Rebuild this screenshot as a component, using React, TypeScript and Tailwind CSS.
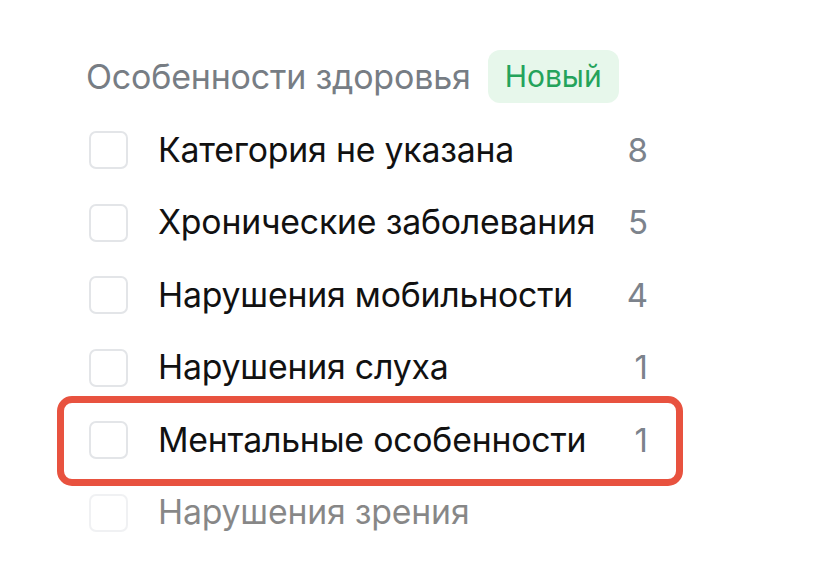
const rows = [
  { label: "Категория не указана", count: 8 },
  { label: "Хронические заболевания", count: 5 },
  { label: "Нарушения мобильности", count: 4 },
  { label: "Нарушения слуха", count: 1 },
  { label: "Ментальные особенности", count: 1, highlight: true },
  { label: "Нарушения зрения", count: null, faded: true },
];

function Row({ label, count, highlight, faded }: { label: string; count: number | null; highlight?: boolean; faded?: boolean }) {
  return (
    <div className={`relative flex h-[72.5px] items-center ${faded ? "opacity-50" : ""}`}>
      <div className="h-[38px] w-[39px] shrink-0 rounded-[7px] border-2 border-[#e3e5e8] bg-white" />
      <div className="ml-[30px] flex-1 text-[33.8px] tracking-[-0.2px] text-[#111]">{label}</div>
      {count !== null && <div className="w-[40px] text-right text-[33px] text-[#7c838c]">{count}</div>}
      {highlight && (
        <div className="pointer-events-none absolute -left-[32px] -right-[35px] -top-[8px] -bottom-[9px] rounded-[15px] border-[7px] border-[#e8523f]" />
      )}
    </div>
  );
}

export default function App() {
  return (
    <div className="h-[582px] w-[814px] bg-white pt-[50px] font-['Inter',sans-serif]">
      <div className="flex items-center pl-[86px]">
        <span className="text-[34px] tracking-[-0.2px] text-[#777d84]">Особенности здоровья</span>
        <span className="ml-[17px] flex h-[53px] items-center rounded-[12px] bg-[#e7f7eb] px-[17px] text-[30px] text-[#25a35b]">
          Новый
        </span>
      </div>
      <div className="mt-[11px] w-[648px] pl-[89px]">
        {rows.map((r) => (
          <Row key={r.label} {...r} />
        ))}
      </div>
    </div>
  );
}
